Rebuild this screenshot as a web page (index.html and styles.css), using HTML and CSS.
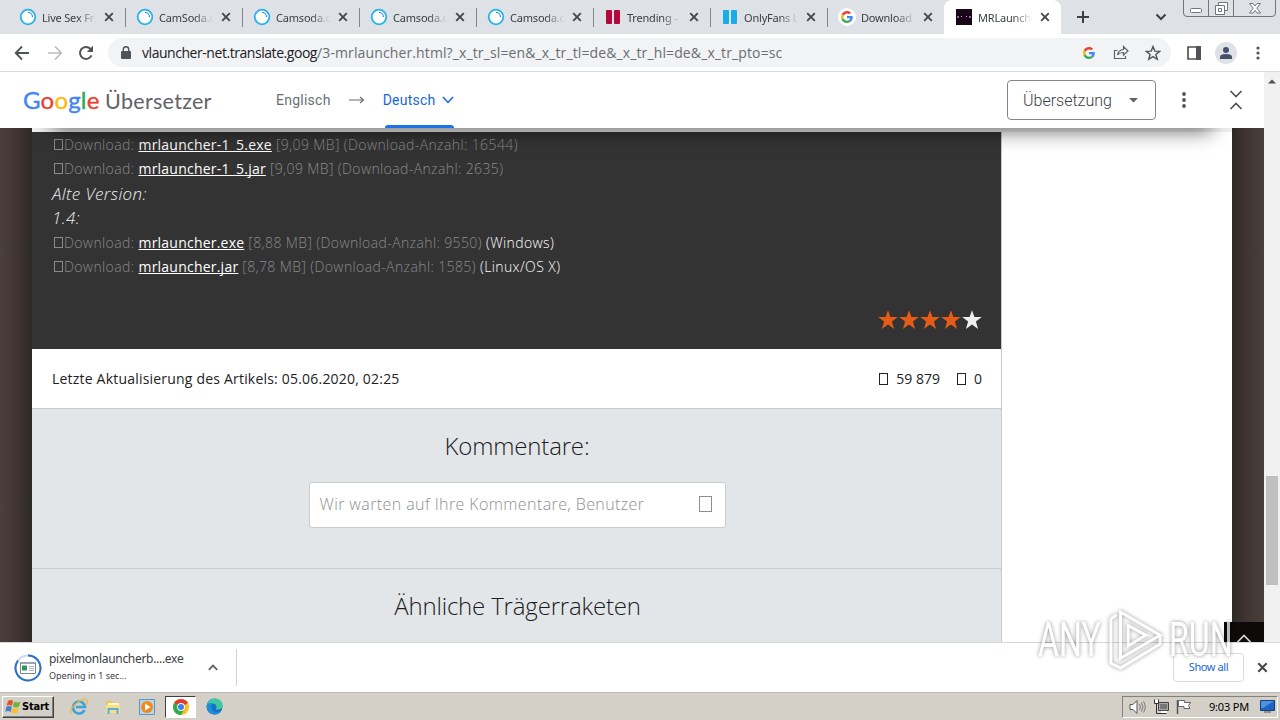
FILE: index.html
```html
<!DOCTYPE html>
<html lang="de">
<head>
    <meta charset="UTF-8">
    <title>MRLauncher</title>
    <link rel="stylesheet" href="styles.css">
</head>
<body>
    <svg width="0" height="0" class="defs">
        <symbol id="i-cam" viewBox="0 0 18 18"><circle cx="9" cy="9" r="7.3" fill="#fff" stroke="#27b3ea" stroke-width="1.800"/><path d="M9 4.500a4.500 4.500 0 0 1 4.500 4.500" fill="none" stroke="#2589c4" stroke-width="1.100"/></symbol>
        <symbol id="i-x" viewBox="0 0 10 10"><path d="M1.2 1.2l7.6 7.6M8.8 1.2L1.2 8.8" stroke="#45484c" stroke-width="1.900"/></symbol>
        <symbol id="i-g" viewBox="0 0 48 48"><path fill="#ea4335" d="M24 9.5c3.5 0 6.700 1.200 9.200 3.600l6.900-6.900C35.900 2.400 30.500 0 24 0 14.600 0 6.500 5.400 2.600 13.200l8 6.200C12.400 13.700 17.700 9.500 24 9.500z"/><path fill="#4285f4" d="M47 24.500c0-1.600-.2-3.100-.4-4.500H24v9h12.900c-.6 3-2.200 5.500-4.700 7.200l7.700 6C44.400 38 47 31.800 47 24.500z"/><path fill="#fbbc05" d="M10.500 28.600a14.500 14.500 0 0 1 0-9.200l-8-6.200a24 24 0 0 0 0 21.600z"/><path fill="#34a853" d="M24 48c6.500 0 11.900-2.100 15.900-5.800l-7.700-6c-2.200 1.500-4.900 2.300-8.200 2.300-6.300 0-11.600-4.200-13.500-9.900l-8 6.200C6.500 42.600 14.600 48 24 48z"/></symbol>
        <symbol id="i-star" viewBox="0 0 20 20"><path d="M10 .2l2.400 6.900h7.400l-5.900 4.500 2.200 7.300L10 14.600l-6.100 4.300 2.200-7.300L.2 7.100h7.400z"/></symbol>
    </svg>

    <div class="tabs">
        <div class="tab"><svg class="fav"><use href="#i-cam"/></svg><span>Live Sex Fr</span><svg class="close"><use href="#i-x"/></svg></div>
        <div class="tab"><svg class="fav"><use href="#i-cam"/></svg><span>CamSoda.c</span><svg class="close"><use href="#i-x"/></svg></div>
        <div class="tab"><svg class="fav"><use href="#i-cam"/></svg><span>Camsoda.c</span><svg class="close"><use href="#i-x"/></svg></div>
        <div class="tab"><svg class="fav"><use href="#i-cam"/></svg><span>Camsoda.c</span><svg class="close"><use href="#i-x"/></svg></div>
        <div class="tab"><svg class="fav"><use href="#i-cam"/></svg><span>Camsoda.c</span><svg class="close"><use href="#i-x"/></svg></div>
        <div class="tab"><svg class="fav" viewBox="0 0 18 18"><path d="M2 3q0-1 1-1h4q1 0 1 1v12q0 1-1 1H3q-1 0-1-1zM10 3q0-1 1-1h4q1 0 1 1v12q0 1-1 1h-4q-1 0-1-1z" fill="#b3093c"/></svg><span>Trending - 1</span><svg class="close"><use href="#i-x"/></svg></div>
        <div class="tab"><svg class="fav" viewBox="0 0 18 18"><path d="M2 3q0-1 1-1h4q1 0 1 1v12q0 1-1 1H3q-1 0-1-1zM10 3q0-1 1-1h4q1 0 1 1v12q0 1-1 1h-4q-1 0-1-1z" fill="#17aee8"/></svg><span>OnlyFans L</span><svg class="close"><use href="#i-x"/></svg></div>
        <div class="tab last"><svg class="fav" viewBox="0 0 18 18"><circle cx="9" cy="9" r="9" fill="#fff"/><use href="#i-g" x="3" y="3" width="12" height="12"/></svg><span>Download M</span><svg class="close"><use href="#i-x"/></svg></div>
        <div class="tab active"><svg class="fav" viewBox="0 0 18 18"><path d="M1 1h16v16H1z" fill="#170719"/><path d="M3 8v2M6 8.500h1M11 8.500h1M15 8v2" stroke="#d9a9d7" stroke-width="1.200"/></svg><span>MRLaunche</span><svg class="close"><use href="#i-x"/></svg></div>
        <svg class="plus" width="14" height="14" viewBox="0 0 14 14"><path d="M7 1v12M1 7h12" stroke="#3c4043" stroke-width="2"/></svg>
        <svg class="search-tabs" width="12" height="8" viewBox="0 0 12 8"><path d="M1.500 1.500L6 6l4.500-4.500" fill="none" stroke="#3c4043" stroke-width="2"/></svg>
        <svg class="win" width="94" height="18" viewBox="0 0 94 18"><g fill="none" stroke="#6f7680"><path d="M.5 0v13q0 3.500 3.500 3.500h85q3.500 0 3.500-3.500V0M25.500 0v16M50.500 0v16"/><rect x="7.500" y="8.500" width="11" height="4" rx="1" fill="#fff"/><path d="M35.500 5.500v-3h9v8h-3M32.500 5.500h9v9h-9zM35.500 8.500h3v3h-3z" fill="#fff"/><path d="M66.500 3.500h3.500l2 2.500 2-2.500h3.500l-3.700 4.700 3.700 4.800h-3.500l-2-2.600-2 2.600h-3.500l3.700-4.800z" fill="#fff"/></g></svg>
    </div>

    <div class="toolbar">
        <svg class="back" width="16" height="16" viewBox="0 0 16 16"><path d="M15 8H2M8 1.500L1.700 8 8 14.500" fill="none" stroke="#505357" stroke-width="1.800"/></svg>
        <svg class="forward" width="16" height="16" viewBox="0 0 16 16"><path d="M1 8h13M8 1.500L14.300 8 8 14.500" fill="none" stroke="#babcbe" stroke-width="1.700"/></svg>
        <svg class="reload" width="16" height="16" viewBox="0 0 16 16"><path d="M13.500 10.300A6 6 0 1 1 12.400 3.800L14 5.500" fill="none" stroke="#505357" stroke-width="2"/><path d="M15 .8v6.200H8.800z" fill="#505357"/></svg>
        <div class="omnibox">
            <svg width="10" height="13" viewBox="0 0 10 13"><path d="M1 5h8q1 0 1 1v6q0 1-1 1H1q-1 0-1-1V6q0-1 1-1z" fill="#505357"/><path d="M2.300 5.500V3.500a2.700 2.700 0 0 1 5.400 0v2" fill="none" stroke="#505357" stroke-width="1.400"/></svg>
            <span class="url"><b>vlauncher-net.translate.goog</b><i>/3-mrlauncher.html?_x_tr_sl=en&amp;_x_tr_tl=de&amp;_x_tr_hl=de&amp;_x_tr_pto=sc</i></span>
            <svg class="push" width="12" height="12"><use href="#i-g"/></svg>
            <svg class="share" width="16" height="15" viewBox="0 0 16 15"><path d="M4.500 5.500H1.500v8h11v-2.500M4.500 10q.8-5.200 6-5.500V1.500L15 6l-4.500 4.200V7.500Q6.500 7.300 4.500 10z" fill="none" stroke="#5f6368" stroke-width="1.200"/></svg>
            <svg class="bookmark" width="16" height="16" viewBox="0 0 16 16"><path d="M8 1.600l1.800 4.500 4.900.3-3.800 3.100 1.300 4.800L8 11.600l-4.200 2.700 1.300-4.800-3.800-3.100 4.900-.3z" fill="none" stroke="#505357" stroke-width="1.400"/></svg>
        </div>
        <svg class="panel" width="14" height="14" viewBox="0 0 14 14"><path d="M1 1h12v12H1z" fill="#fff" stroke="#505357" stroke-width="1.700"/><path d="M9 0h5v14H9z" fill="#505357"/></svg>
        <svg class="avatar" width="22" height="22" viewBox="0 0 22 22"><circle cx="11" cy="11" r="11" fill="#dee1e6"/><circle cx="11" cy="8" r="3" fill="#46506b"/><path d="M5 17v-2q0-3 6-3t6 3v2z" fill="#46506b"/></svg>
        <svg class="menu" width="4" height="14" viewBox="0 0 4 14" fill="#505357"><circle cx="2" cy="2" r="1.600"/><circle cx="2" cy="7" r="1.600"/><circle cx="2" cy="12" r="1.600"/></svg>
    </div>

    <div class="viewport">
        <div class="view">
            <header class="translate">
                <div class="logo"><span class="google"><em class="b">G</em><em class="r">o</em><em class="y">o</em><em class="b">g</em><em class="g">l</em><em class="r">e</em></span><span class="product">Übersetzer</span></div>
                <span class="lang">Englisch</span>
                <svg class="arrow" width="16" height="8" viewBox="0 0 16 8"><path d="M0 4h14M11 1l3.500 3L11 7" fill="none" stroke="#6b6e72" stroke-width="1.200"/></svg>
                <div class="lang target">Deutsch<svg width="12" height="8" viewBox="0 0 12 8"><path d="M1 1l5 5.500L11 1" fill="none" stroke="#1967d2" stroke-width="1.500"/></svg></div>
                <div class="select">Übersetzung<svg width="9" height="5" viewBox="0 0 9 5"><path d="M0 0h9L4.500 4.500z" fill="#5f6368"/></svg></div>
                <svg class="dots" width="4" height="16" viewBox="0 0 4 16" fill="#505357"><circle cx="2" cy="2" r="1.900"/><circle cx="2" cy="8" r="1.900"/><circle cx="2" cy="14" r="1.900"/></svg>
                <svg class="collapse" width="14" height="22" viewBox="0 0 14 22"><path d="M1.500 2L7 7.500 12.500 2M1.500 20L7 14.500l5.500 5.500" fill="none" stroke="#505357" stroke-width="1.700"/></svg>
            </header>

            <div class="page">
                <main class="sheet">
                    <article>
                        <section class="downloads">
                            <p><span class="glyph"></span>Download: <a>mrlauncher-1_5.exe</a> [9,09 MB] (Download-Anzahl: 16544)</p>
                            <p><span class="glyph"></span>Download: <a>mrlauncher-1_5.jar</a> [9,09 MB] (Download-Anzahl: 2635)</p>
                            <h4>Alte Version:</h4>
                            <h4>1.4:</h4>
                            <p><span class="glyph"></span>Download: <a>mrlauncher.exe</a> [8,88 MB] (Download-Anzahl: 9550) <strong>(Windows)</strong></p>
                            <p><span class="glyph"></span>Download: <a>mrlauncher.jar</a> [8,78 MB] (Download-Anzahl: 1585) <strong>(Linux/OS X)</strong></p>
                            <div class="rating">
                                <svg><use href="#i-star"/></svg><svg><use href="#i-star"/></svg><svg><use href="#i-star"/></svg><svg><use href="#i-star"/></svg><svg class="off"><use href="#i-star"/></svg>
                            </div>
                        </section>
                        <section class="info">
                            <span class="updated">Letzte Aktualisierung des Artikels: 05.06.2020, 02:25</span>
                            <span class="count"><span class="glyph"></span>59 879</span>
                            <span class="count"><span class="glyph"></span>0</span>
                        </section>
                        <section class="comments">
                            <h2>Kommentare:</h2>
                            <div class="comment-box">Wir warten auf Ihre Kommentare, Benutzer<span class="glyph"></span></div>
                        </section>
                        <section class="similar">
                            <h2>Ähnliche Trägerraketen</h2>
                        </section>
                    </article>
                </main>
                <div class="to-top"><svg width="16" height="9" viewBox="0 0 16 9"><path d="M1.500 8L8 1.500 14.500 8" fill="none" stroke="#d4d4d4" stroke-width="1.700"/></svg></div>
            </div>
        </div>
        <div class="scrollbar"><svg width="8" height="5" viewBox="0 0 8 5"><path d="M0 4.500L4 .5l4 4z" fill="#505050"/></svg><div class="thumb"></div></div>
    </div>

    <div class="shelf">
        <svg class="file" width="28" height="28" viewBox="0 0 28 28"><circle cx="14" cy="14" r="12.500" fill="#fff" stroke="#c9dcf7" stroke-width="2"/><path d="M14 1.500A12.500 12.500 0 1 1 4 6.500" fill="none" stroke="#2a6fc9" stroke-width="2"/><path d="M6.500 8.500h15v11h-15z" fill="#fff" stroke="#7b8791"/><path d="M7 8h14v2H7z" fill="#9aa7b3"/><path d="M8 11.500h5v5H8z" fill="#2f9367"/><path d="M15 12.500h5M15 14.500h5M15 16.500h5" stroke="#aab3bb"/></svg>
        <div class="file-text"><div class="file-name">pixelmonlauncherb....exe</div><div class="file-state">Opening in 1 sec...</div></div>
        <svg class="up" width="10" height="7" viewBox="0 0 10 7"><path d="M.8 5.800L5 1.500l4.200 4.300" fill="none" stroke="#5f6368" stroke-width="1.800"/></svg>
        <div class="show-all">Show all</div>
        <svg class="close-shelf" width="11" height="11"><use href="#i-x"/></svg>
    </div>

    <div class="taskbar">
        <div class="start"><svg width="17" height="16" viewBox="0 0 17 16"><path d="M3 2q3-2 5 0L7 7Q4 5 1.500 7z" fill="#e5532d"/><path d="M9 2.500q3 2 6.500 0L14 7.500q-3 2-6 0z" fill="#6fb53d"/><path d="M1.300 8q3-2 5.500 0l-1 5q-3-2-5.500 0z" fill="#3f82cf"/><path d="M7.800 8.500q3 2 6 0l-1.300 5q-3 2-6 0z" fill="#f6c02e"/></svg>Start</div>
        <svg class="app" width="18" height="18" viewBox="0 0 18 18"><path d="M14.500 12A6 6 0 1 1 15 9H6" fill="none" stroke="#39a3df" stroke-width="2.600"/><path d="M1 16Q-1 11 7 5T17 2.500q1 2-1.500 5" fill="none" stroke="#e8b93c" stroke-width="1.300"/></svg>
        <svg class="app" width="18" height="18" viewBox="0 0 18 18"><path d="M2 3h5l1 1.500h7V15H2z" fill="#e9c55c"/><path d="M4 5h11v4H4z" fill="#fff8cf"/><path d="M2 7h14v8H2z" fill="#f6df88"/><path d="M4.500 16v-5h9v5" fill="none" stroke="#59afd9" stroke-width="2"/></svg>
        <svg class="app" width="18" height="18" viewBox="0 0 18 18"><path d="M1.500 1.500h15v15h-15z" fill="#b6d6ee" stroke="#5f94c4"/><circle cx="9" cy="9" r="6" fill="#f08a1d"/><path d="M7 5.500L12.500 9 7 12.500z" fill="#fff"/></svg>
        <div class="current"><svg width="16" height="16" viewBox="0 0 16 16"><circle cx="8" cy="8" r="8" fill="#fbc116"/><path d="M8 8L1.100 4A8 8 0 0 1 14.900 4z" fill="#e33b2e"/><path d="M1.100 4A8 8 0 0 0 8 16l3.400-6L8 8z" fill="#2da94f"/><circle cx="8" cy="8" r="3.900" fill="#fff"/><circle cx="8" cy="8" r="3" fill="#3f7ee8"/></svg></div>
        <svg class="edge" width="17" height="17" viewBox="0 0 17 17"><circle cx="8.500" cy="8.500" r="8" fill="#1672c4"/><path d="M.8 7Q3 .5 9 .5q7.500.5 7.500 7 0 4-5 4-2.500 0-1-2Q11 6 7 5.500 3 5.500.8 7z" fill="#3fc9a0"/><path d="M.6 8Q2 4 7 5.500 4 8 6 12q3 4 9 1.500-3 3.500-7 3Q1 15.500.6 8z" fill="#1b8edb"/></svg>
        <div class="tray">
            <svg width="17" height="16" viewBox="0 0 17 16"><path d="M1 5.500h3l4-4v13l-4-4H1z" fill="#fff" stroke="#555"/><path d="M10.500 5q2 3 0 6M12.500 3.500q3 4.500 0 9M14.500 2.500q3.500 5.500 0 11" fill="none" stroke="#777"/></svg>
            <svg width="16" height="16" viewBox="0 0 16 16"><path d="M5.500 3.500h10v8h-10z" fill="#aaa" stroke="#444"/><path d="M7 5h7v5H7z" fill="#777"/><path d="M1.500.5v4h4v-4M3.500 4v10.500h10" fill="none" stroke="#333"/><path d="M2 1h3v3H2zM8 12h6v2H8z" fill="#fff"/></svg>
            <svg width="16" height="16" viewBox="0 0 16 16"><path d="M1.500 1v14" stroke="#555" stroke-width="1.500"/><path d="M2.500 1.500h6v2h6l-2 3 1.500 3h-6v-2h-5.500z" fill="#fff" stroke="#666"/></svg>
            <span class="time">9:03 PM</span>
            <svg class="desk" width="15" height="13" viewBox="0 0 15 13"><path d="M.5.5h14v10H.5z" fill="#1f63c4" stroke="#174076"/><path d="M1 1h13L3 8H1z" fill="#4e92e4"/><path d="M4 12h7" stroke="#555"/></svg>
        </div>
    </div>

    <div class="watermark">
        <span>ANY</span>
        <svg width="56" height="64" viewBox="0 0 58 64"><path d="M14 3L55 27 14 51zM14 3v48M4 10v46L14 61 55 36V27M4 10l6-4M22 17v21l18-11z" fill="none" stroke="#fff" stroke-width="3"/></svg>
        <span>RUN</span>
    </div>
</body>
</html>
```
FILE: styles.css
```css
* {
    box-sizing: border-box;
}
body {
    margin: 0;
    width: 1280px;
    height: 720px;
    overflow: hidden;
    display: flex;
    flex-direction: column;
    position: relative;
    background: #fff;
    font-family: "Noto Sans", "Open Sans", sans-serif;
}
svg {
    flex: none;
    display: block;
}
.defs {
    position: absolute;
}
h2, h4, p {
    margin: 0;
    font-weight: normal;
}

/* tab strip */
.tabs {
    flex: none;
    height: 34px;
    display: flex;
    background: #dee1e6;
    padding-left: 9px;
}
.tab {
    width: 117px;
    height: 34px;
    display: flex;
    align-items: center;
    padding-left: 10px;
    position: relative;
    font-size: 11px;
    color: #3c4043;
}
.tab::after {
    content: "";
    position: absolute;
    right: 0;
    top: 8px;
    width: 1px;
    height: 19px;
    background: #80868b;
}
.tab.last::after, .tab.active::after {
    display: none;
}
.tab span {
    width: 54px;
    margin: 0 8px 0 5px;
    overflow: hidden;
    white-space: nowrap;
    letter-spacing: -0.2px;
    -webkit-mask-image: linear-gradient(90deg, #000 65%, transparent);
    mask-image: linear-gradient(90deg, #000 65%, transparent);
}
.fav {
    width: 18px;
    height: 18px;
}
.close {
    width: 10px;
    height: 10px;
}
.tab.active {
    margin-left: -1px;
    padding-left: 11px;
    background: #fff;
    border-radius: 8px 8px 0 0;
}
.plus {
    margin: 10px 0 0 15px;
}
.search-tabs {
    margin: 13px 0 0 65px;
}
.win {
    margin-left: 16px;
}

/* toolbar */
.toolbar {
    flex: none;
    height: 38px;
    display: flex;
    align-items: center;
    border-bottom: 1px solid #dadce0;
    padding: 0 20px 0 14px;
}
.forward {
    margin-left: 17px;
}
.reload {
    margin-left: 15px;
}
.omnibox {
    width: 1063px;
    height: 29px;
    margin-left: 14px;
    border-radius: 15px;
    background: #f1f3f4;
    display: flex;
    align-items: center;
    padding: 0 10px 0 13px;
}
.url {
    margin-left: 11px;
    font-size: 14px;
    line-height: 20px;
    white-space: nowrap;
    font-family: "Open Sans", sans-serif;
}
.url b {
    font-weight: normal;
    color: #202124;
    letter-spacing: -0.45px;
}
.url i {
    font-style: normal;
    color: #6a6e73;
    letter-spacing: .12px;
}
.push {
    margin-left: auto;
}
.share {
    margin-left: 18px;
}
.bookmark {
    margin-left: 16px;
}
.panel {
    margin-left: 16px;
}
.avatar {
    margin-left: 14px;
}
.menu {
    margin-left: auto;
}

/* page viewport */
.viewport {
    flex: none;
    height: 570px;
    display: flex;
}
.view {
    width: 1264px;
    display: flex;
    flex-direction: column;
}
.scrollbar {
    width: 16px;
    background: #f1f1f1;
    padding: 7px 2px 0;
}
.scrollbar svg {
    margin-left: 2px;
}
.thumb {
    height: 109px;
    margin-top: 392px;
    background: #c1c1c1;
}

/* translate header */
.translate {
    height: 56px;
    display: flex;
    align-items: center;
    padding: 0 21px 0 23px;
    background: #fff;
}
.logo {
    display: flex;
    align-items: baseline;
    width: 253px;
    font-family: Lato, sans-serif;
    font-size: 21.5px;
    line-height: 30px;
    letter-spacing: .3px;
    color: #5f6368;
}
.google {
    width: 82px;
    font-size: 24px;
    -webkit-text-stroke: .4px currentColor;
    letter-spacing: .2px;
}
.google em {
    font-style: normal;
}
.google .b {
    color: #4285f4;
}
.google .r {
    color: #ea4335;
}
.google .y {
    color: #fbbc05;
}
.google .g {
    color: #34a853;
}
.lang {
    font-family: Roboto, sans-serif;
    font-size: 14px;
    letter-spacing: .25px;
    color: #6b6f74;
}
.arrow {
    margin: 0 18px;
}
.lang.target {
    height: 56px;
    display: flex;
    align-items: center;
    color: #1967d2;
    position: relative;
}
.target svg {
    margin-left: 6px;
}
.target::after {
    content: "";
    position: absolute;
    left: 2px;
    right: 0;
    bottom: 0;
    height: 3px;
    border-radius: 3px 3px 0 0;
    background: #1a73e8;
}
.select {
    width: 149px;
    height: 40px;
    margin-left: auto;
    border: 1px solid #80868b;
    border-radius: 4px;
    display: flex;
    align-items: center;
    justify-content: space-between;
    padding: 0 17px 0 15px;
    font-family: Roboto, sans-serif;
    font-size: 16px;
    font-weight: 300;
    color: #3c4043;
}
.dots {
    margin-left: 26px;
}
.collapse {
    margin-left: 43px;
}

/* site */
.page {
    flex: 1;
    position: relative;
    padding: 0 32px;
    background: linear-gradient(90deg, #4a403d 0, #403532 16px, #2f2a27 32px, #2f2a27 1232px, #403532 1248px, #48413d 1264px);
    font-family: "Open Sans", sans-serif;
    overflow: hidden;
}
.page::before {
    content: "";
    position: absolute;
    left: 52px;
    right: 52px;
    top: -20px;
    height: 20px;
    box-shadow: 0 3px 20px rgba(0, 0, 0, .6);
}
.sheet {
    height: 100%;
    border-top: 4px solid #f0f0f0;
    background: #fff;
}
article {
    width: 970px;
    height: 100%;
    border-right: 1px solid #c8c8c8;
    background: #e3e6e8;
}
.downloads {
    height: 217px;
    padding: 1px 19px 0 20px;
    background: #333;
    color: #8a8a8a;
}
.downloads p {
    height: 24.4px;
    line-height: 24.4px;
    font-size: 14px;
    font-weight: 300;
    letter-spacing: .39px;
    white-space: nowrap;
}
.downloads h4 {
    height: 24.4px;
    line-height: 24.4px;
    font-size: 17px;
    font-weight: 300;
    font-style: italic;
    letter-spacing: .4px;
    color: #eee;
}
.downloads a, .downloads strong {
    font-weight: normal;
    color: #fff;
}
.downloads a {
    letter-spacing: .22px;
    text-decoration: underline;
    text-decoration-skip-ink: none;
}
.downloads strong {
    font-weight: 300;
}
.glyph {
    display: inline-block;
    width: 9px;
    height: 11px;
    border: 1px solid currentColor;
}
.downloads .glyph {
    margin: 0 1px 0 2px;
}
.rating {
    display: flex;
    justify-content: flex-end;
    margin-top: 31px;
    gap: 1px;
}
.rating svg {
    width: 20px;
    height: 20px;
    fill: #e65c17;
}
.rating .off {
    fill: #eee;
}
.info {
    height: 60px;
    border-bottom: 1px solid #c8c8c8;
    background: #fff;
    display: flex;
    align-items: center;
    padding: 0 19px 0 20px;
    font-size: 14px;
    color: #222;
}
.updated {
    margin-right: auto;
    letter-spacing: .2px;
}
.count {
    margin-left: 17px;
}
.count .glyph {
    height: 12px;
    margin-right: 8px;
    vertical-align: -1px;
}
.comments {
    height: 160px;
    border-bottom: 1px solid #c9ccce;
    padding: 20px 0 0 1px;
}
h2 {
    text-align: center;
    font-size: 24px;
    line-height: 34px;
    font-weight: 300;
    letter-spacing: -0.17px;
    color: #1c1c1c;
}
.comment-box {
    width: 417px;
    height: 46px;
    margin: 19px auto 0;
    border: 1px solid #ccc;
    border-radius: 3px;
    background: #fff;
    display: flex;
    align-items: center;
    justify-content: space-between;
    padding: 0 13px 2px 10px;
    font-size: 16px;
    font-weight: 300;
    letter-spacing: .4px;
    color: #8f8f8f;
}
.comment-box .glyph {
    width: 13px;
    height: 16px;
}
.similar {
    padding: 20px 0 0 2px;
}
.to-top {
    position: absolute;
    right: 0;
    bottom: 0;
    width: 40px;
    height: 20px;
    background: #0d0a09;
    padding: 12px 12px 0;
}

/* download shelf */
.shelf {
    flex: none;
    height: 51px;
    display: flex;
    align-items: center;
    border-top: 1px solid #d5d7da;
    border-bottom: 1px solid #b9bbbd;
    padding: 0 12px 0 14px;
    color: #3c4043;
}
.file-text {
    width: 159px;
    margin: -1px 0 0 7px;
}
.file-name {
    font-size: 12px;
    line-height: 17px;
    letter-spacing: -0.3px;
}
.file-state {
    font-size: 9px;
    line-height: 17px;
}
.shelf::after {
    content: "";
    order: 1;
    width: 1px;
    height: 37px;
    margin-left: 18px;
    background: #d0d2d5;
}
.show-all {
    order: 2;
    width: 71px;
    height: 29px;
    margin-left: auto;
    border: 1px solid #dadce0;
    border-radius: 4px;
    text-align: center;
    line-height: 25px;
    font-size: 11px;
    letter-spacing: -0.4px;
    color: #1967d2;
}
.close-shelf {
    order: 3;
    margin-left: 13px;
}

/* windows taskbar */
.taskbar {
    flex: none;
    height: 27px;
    display: flex;
    align-items: center;
    background: #d4d0c8;
    padding: 2px;
}
.start {
    width: 52px;
    height: 22px;
    display: flex;
    align-items: center;
    padding-left: 2px;
    border: 1px solid;
    border-color: #fff #404040 #404040 #fff;
    box-shadow: inset -1px -1px #808080;
    font-family: "DejaVu Sans Condensed", "DejaVu Sans", sans-serif;
    font-size: 11px;
    font-weight: bold;
    letter-spacing: -0.2px;
    color: #000;
}
.app {
    margin-left: 16px;
}
.current {
    width: 31px;
    height: 22px;
    margin-left: 9px;
    border: 1px solid;
    border-color: #404040 #fff #fff #404040;
    background: #fff;
    display: flex;
    align-items: center;
    justify-content: center;
}
.edge {
    margin-left: 10px;
}
.tray {
    width: 156px;
    height: 22px;
    margin-left: auto;
    border: 1px solid;
    border-color: #808080 #fff #fff #808080;
    display: flex;
    align-items: center;
    padding-left: 6px;
    gap: 7px;
}
.time {
    margin-left: 10px;
    white-space: nowrap;
    font-size: 11px;
    letter-spacing: -0.2px;
    color: #000;
}
.desk {
    margin: 0 2px 0 auto;
}

/* overlay mark */
.watermark {
    position: absolute;
    left: 1038px;
    top: 608px;
    display: flex;
    align-items: center;
    gap: 6px;
    font-family: Roboto, sans-serif;
    font-size: 48px;
    line-height: 64px;
    color: #fff;
    opacity: .72;
    filter: drop-shadow(0 0 2px rgba(0, 0, 0, .6));
}
.watermark span {
    width: 63px;
    transform: scaleX(.67);
    transform-origin: 0 0;
}
```
